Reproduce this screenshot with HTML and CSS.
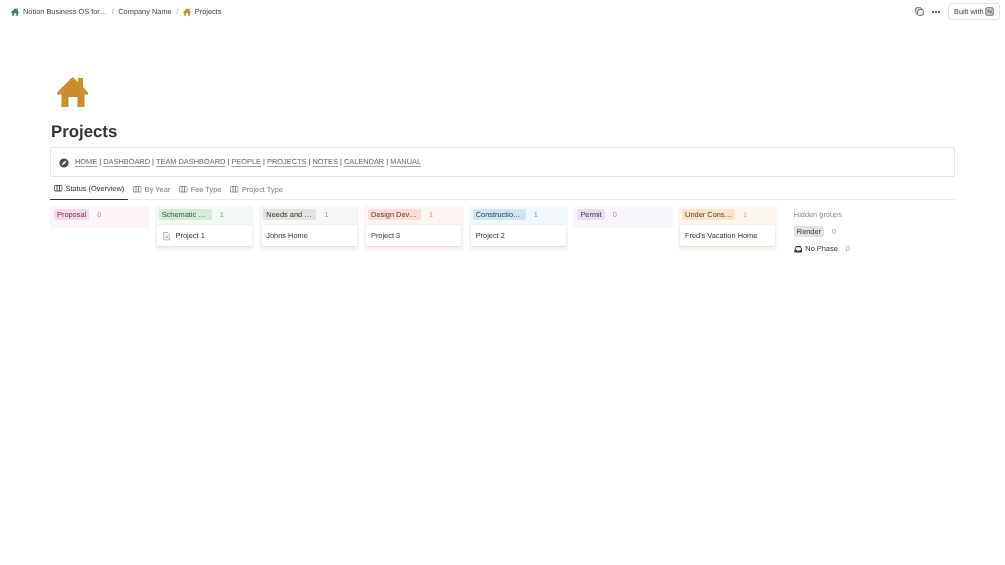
FILE: index.html
```html
<!DOCTYPE html>
<html lang="en">
<head>
<meta charset="utf-8">
<title>Projects</title>
<link rel="stylesheet" href="styles.css">
</head>
<body>
<svg class="defs" width="0" height="0" aria-hidden="true">
  <symbol id="house" viewBox="0 0 31 30"><path d="M15.500 0 L21 5 V1 H26 V10 L31 15.500 V17.500 H27.500 V30 H20.500 V20 H11.500 V30 H4.500 V17.500 H0 V15.500 Z"/></symbol>
  <symbol id="table" viewBox="0 0 14 14"><path d="M2 2.500h10a1.500 1.500 0 0 1 1.500 1.500v6a1.500 1.500 0 0 1-1.500 1.500H2A1.500 1.500 0 0 1 .5 10V4A1.500 1.500 0 0 1 2 2.500Zm3 0v9m4-9v9" fill="none" stroke="currentColor" stroke-width="1.400"/></symbol>
</svg>
<div class="shot">
<header class="topbar">
  <nav class="crumbs">
    <svg class="crumb-icon green"><use href="#house"/></svg>
    <span>Notion Business OS for…</span>
    <span class="sep">/</span>
    <span>Company Name</span>
    <span class="sep">/</span>
    <svg class="crumb-icon gold"><use href="#house"/></svg>
    <span>Projects</span>
  </nav>
  <div class="actions">
    <svg class="copy" viewBox="0 0 12 12"><rect x="1" y="1" width="7.500" height="7.500" rx="1.500"/><rect x="3.500" y="3.500" width="7.500" height="7.500" rx="1.500"/></svg>
    <span class="dots"><i></i><i></i><i></i></span>
    <span class="built">Built with
      <svg class="notion" viewBox="0 0 12 12"><rect x="1" y="1" width="10" height="10" rx="1.500"/><path d="M4 3.500v5M4 3.500l4 5M8 3.500v5"/></svg>
    </span>
  </div>
</header>
<main class="page">
  <svg class="page-icon"><use href="#house"/></svg>
  <h1>Projects</h1>
  <div class="callout">
    <svg class="compass" viewBox="0 0 12 12"><circle cx="6" cy="6" r="5.500"/><path class="needle" d="M9 3 L7 7 L3 9 L5 5 Z"/></svg>
    <p><a>HOME</a> | <a>DASHBOARD</a> | <a>TEAM DASHBOARD</a> | <a>PEOPLE</a> | <a>PROJECTS</a> | <a>NOTES</a> | <a>CALENDAR</a> | <a>MANUAL</a></p>
  </div>
  <div class="tabs">
    <span class="tab active"><svg class="tab-icon"><use href="#table"/></svg>Status (Overview)</span>
    <span class="tab"><svg class="tab-icon"><use href="#table"/></svg>By Year</span>
    <span class="tab"><svg class="tab-icon"><use href="#table"/></svg>Fee Type</span>
    <span class="tab"><svg class="tab-icon"><use href="#table"/></svg>Project Type</span>
  </div>
  <section class="board">
    <div class="col empty pink">
      <div class="col-head"><span class="tag">Proposal</span><span class="count">0</span></div>
    </div>
    <div class="col green-col">
      <div class="col-head"><span class="tag wide">Schematic …</span><span class="count">1</span></div>
      <div class="card"><svg class="doc" viewBox="0 0 10 12"><path d="M1 .7h5.500L9 3.200v8H1Z"/><path d="M3 6h4M3 8h4"/></svg>Project 1</div>
    </div>
    <div class="col gray">
      <div class="col-head"><span class="tag wide">Needs and …</span><span class="count">1</span></div>
      <div class="card">Johns Home</div>
    </div>
    <div class="col red">
      <div class="col-head"><span class="tag wide">Design Dev…</span><span class="count">1</span></div>
      <div class="card">Project 3</div>
    </div>
    <div class="col blue">
      <div class="col-head"><span class="tag wide">Constructio…</span><span class="count">1</span></div>
      <div class="card">Project 2</div>
    </div>
    <div class="col empty purple">
      <div class="col-head"><span class="tag">Permit</span><span class="count">0</span></div>
    </div>
    <div class="col orange">
      <div class="col-head"><span class="tag wide">Under Cons…</span><span class="count">1</span></div>
      <div class="card">Fred's Vacation Home</div>
    </div>
    <aside class="hidden-groups">
      <div class="hidden-title">Hidden groups</div>
      <div class="hidden-row"><span class="tag render">Render</span><span class="count">0</span></div>
      <div class="hidden-row"><svg class="inbox" viewBox="0 0 12 12"><path d="M2.500 1.500h7L11.500 7v3.500h-11V7Z"/><path class="slot" d="M3 3h6l1 4H8.200L7.500 8h-3l-.7-1H2Z"/></svg><span class="nophase">No Phase</span><span class="count">0</span></div>
    </aside>
  </section>
</main>
</div>
</body>
</html>
```
FILE: styles.css
```css
* { box-sizing: border-box; }
html, body { margin: 0; height: 100%; }
body {
  background: #fff;
  color: #37352f;
  font-family: "Liberation Sans", Arial, sans-serif;
  font-size: 7.400px;
  text-rendering: geometricPrecision;
  overflow: hidden;
}
.defs { display: block; height: 0; }
.shot { height: 100%; filter: blur(.3px); }
.topbar {
  height: 23px;
  padding: 0 5px 0 11px;
  display: flex;
  align-items: center;
  justify-content: space-between;
}
.crumbs { display: flex; align-items: center; color: #45433f; white-space: nowrap; }
.crumb-icon { width: 8px; height: 8px; margin-right: 4px; }
.crumb-icon.green { fill: #3f7d5c; }
.crumb-icon.gold { fill: #c98f2f; }
.sep { margin: 0 4.500px; color: #a8a7a3; }
.actions { display: flex; align-items: center; }
.copy { width: 9px; height: 9px; margin-right: 8px; fill: #fff; stroke: #45433f; stroke-width: 1.100; }
.dots { display: flex; gap: 1px; margin-right: 8px; }
.dots i { width: 2px; height: 2px; border-radius: 50%; background: #45433f; }
.built {
  height: 17px;
  width: 52px;
  padding: 0 5px;
  display: flex;
  align-items: center;
  justify-content: space-between;
  border: 1px solid #e3e3e1;
  border-radius: 3px;
  color: #45433f;
  white-space: nowrap;
}
.notion { width: 9px; height: 9px; fill: #d9d8d5; stroke: #45433f; stroke-width: 1; }
.notion path { fill: none; }
.page { padding: 54px 50px 0 51px; }
.page-icon { display: block; width: 31px; height: 30px; margin-left: 6px; fill: #c98f2f; }
h1 { margin: 15px 0 0; font-size: 16.800px; line-height: 20px; font-weight: 700; color: #37352f; }
.callout {
  margin: 5px 0 0 -1px;
  height: 30px;
  padding: 0 8px;
  display: flex;
  align-items: center;
  gap: 6px;
  border: 1px solid #e3e3e1;
  border-radius: 2px;
}
.compass { width: 10px; height: 10px; flex: none; margin-top: 1px; fill: #4f4d48; }
.compass .needle { fill: #fff; }
.callout p { margin: 0 0 2px; color: #45433f; white-space: nowrap; }
.callout a { color: #6a6863; text-decoration: underline; text-decoration-color: #a8a7a3; text-underline-offset: 1.500px; }
.tabs {
  margin: 1px 0 0 -1px;
  height: 22px;
  display: flex;
  gap: 1px;
  border-bottom: 1px solid #ececea;
}
.tab {
  height: 22px;
  padding: 0 4px;
  display: flex;
  align-items: center;
  gap: 3px;
  color: #7b7a76;
  white-space: nowrap;
}
.tab.active { color: #37352f; border-bottom: 1.500px solid #37352f; }
.tab-icon { width: 8.500px; height: 8.500px; }
.board { margin: 6px 0 0 -1px; display: flex; align-items: flex-start; gap: 5.200px; }
.col { width: 99.500px; flex: none; padding: 3.300px 2.300px 5px; border-radius: 3px; }
.col.empty { padding-bottom: 2.500px; }
.col-head { height: 10.700px; margin-bottom: 5.300px; padding-left: 1.700px; display: flex; align-items: center; }
.tag { height: 10.700px; line-height: 11.700px; padding: 0 3px; border-radius: 2px; white-space: nowrap; color: #37352f; }
.tag.wide { width: 53px; }
.count { margin-left: 8px; }
.card {
  height: 20.700px;
  padding: 0 4.600px;
  display: flex;
  align-items: center;
  background: #fff;
  border-radius: 2px;
  box-shadow: 0 .5px 2px rgba(15,15,15,.12);
  white-space: nowrap;
  color: #37352f;
}
.doc { width: 7px; height: 8.500px; margin: 2px 6px 0 1px; fill: none; stroke: #8f8e8a; stroke-width: .9; }
.pink { background: #fdf5fa; } .pink .tag { background: #f5d9e6; color: #6d3352; } .pink .count { color: #d68bb0; }
.green-col { background: #f5f9f6; } .green-col .tag { background: #d5ead9; color: #2f5a3e; } .green-col .count { color: #6fa583; }
.gray { background: #f7f7f6; } .gray .tag { background: #e3e2e0; color: #37352f; } .gray .count { color: #9b9a97; }
.red { background: #fef5f3; } .red .tag { background: #fbdcd7; color: #6e2f2a; } .red .count { color: #e58a80; }
.blue { background: #f2f8fc; } .blue .tag { background: #d2e4ef; color: #24465c; } .blue .count { color: #6ba2c7; }
.purple { background: #f9f6fc; } .purple .tag { background: #e8deee; color: #46305c; } .purple .count { color: #b08fc7; }
.orange { background: #fcf8f1; } .orange .tag { background: #fae5c9; color: #5c4020; } .orange .count { color: #e0a95f; }
.hidden-groups { margin-left: 11px; padding-top: 3.300px; }
.hidden-title { height: 11px; line-height: 11px; color: #8f8e8a; white-space: nowrap; }
.hidden-row { margin-top: 6px; height: 11px; display: flex; align-items: center; white-space: nowrap; }
.render { background: #e3e2e0; }
.hidden-row .count { color: #a8a7a3; }
.inbox { width: 8.500px; height: 8.500px; margin-right: 3px; fill: #37352f; }
.inbox .slot { fill: #fff; }
.nophase { color: #37352f; }
```
